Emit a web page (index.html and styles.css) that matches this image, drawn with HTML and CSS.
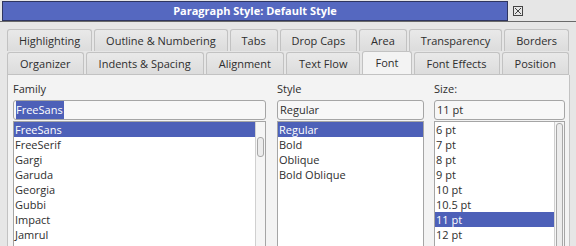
FILE: index.html
```html
<!DOCTYPE html>
<html lang="en">

<head>
    <meta charset="UTF-8">
    <title>Paragraph Style: Default Style</title>
    <link rel="stylesheet" href="styles.css">
</head>

<body>
    <div class="window">
        <div class="titlebar">
            <div class="title">Paragraph Style: Default Style</div>
            <div class="close-btn">
                <svg width="10" height="10" viewBox="0 0 10 10">
                    <rect x="0.5" y="0.5" width="9" height="9" fill="none" stroke="#444" />
                    <path d="M2 2 L8 8 M8 2 L2 8" stroke="#444" stroke-width="1" />
                </svg>
            </div>
        </div>

        <div class="tabs">
            <div class="tab-row">
                <div class="tab">Highlighting</div>
                <div class="tab">Outline &amp; Numbering</div>
                <div class="tab">Tabs</div>
                <div class="tab">Drop Caps</div>
                <div class="tab">Area</div>
                <div class="tab">Transparency</div>
                <div class="tab">Borders</div>
            </div>
            <div class="tab-row">
                <div class="tab">Organizer</div>
                <div class="tab">Indents &amp; Spacing</div>
                <div class="tab">Alignment</div>
                <div class="tab">Text Flow</div>
                <div class="tab active">Font</div>
                <div class="tab">Font Effects</div>
                <div class="tab">Position</div>
            </div>
        </div>

        <div class="panel">
            <div class="field family">
                <div class="label">Family</div>
                <div class="entry"><span class="sel-text">FreeSans</span></div>
                <div class="listbox">
                    <div class="items">
                        <div class="item selected">FreeSans</div>
                        <div class="item">FreeSerif</div>
                        <div class="item">Gargi</div>
                        <div class="item">Garuda</div>
                        <div class="item">Georgia</div>
                        <div class="item">Gubbi</div>
                        <div class="item">Impact</div>
                        <div class="item">Jamrul</div>
                    </div>
                    <div class="scrollbar">
                        <div class="thumb thumb-family"></div>
                    </div>
                </div>
            </div>

            <div class="field style">
                <div class="label">Style</div>
                <div class="entry">Regular</div>
                <div class="listbox">
                    <div class="items">
                        <div class="item selected">Regular</div>
                        <div class="item">Bold</div>
                        <div class="item">Oblique</div>
                        <div class="item">Bold Oblique</div>
                    </div>
                </div>
            </div>

            <div class="field size">
                <div class="label">Size:</div>
                <div class="entry">11 pt</div>
                <div class="listbox">
                    <div class="items">
                        <div class="item">6 pt</div>
                        <div class="item">7 pt</div>
                        <div class="item">8 pt</div>
                        <div class="item">9 pt</div>
                        <div class="item">10 pt</div>
                        <div class="item">10.5 pt</div>
                        <div class="item selected">11 pt</div>
                        <div class="item">12 pt</div>
                    </div>
                    <div class="scrollbar">
                        <div class="thumb thumb-size"></div>
                    </div>
                </div>
            </div>
        </div>
    </div>
</body>

</html>
```

FILE: styles.css
```css
* {
    box-sizing: border-box;
}

body {
    margin: 0;
    background-color: #e6e6e6;
    font-family: "Open Sans", sans-serif;
    font-size: 11px;
    color: #2e2e2e;
    overflow: hidden;
}

.window {
    width: 576px;
    height: 246px;
    overflow: hidden;
}

.titlebar {
    display: flex;
    align-items: center;
    height: 22px;
    padding: 1px 0 0 2px;
    border-bottom: 1px solid #6a6a6a;
}

.title {
    width: 506px;
    height: 20px;
    background-color: #5568c0;
    border: 1px solid #2e3560;
    color: #fff;
    font-weight: bold;
    font-size: 11px;
    line-height: 18px;
    text-align: center;
}

.close-btn {
    margin-left: 5px;
    display: flex;
    align-items: center;
}

.tabs {
    padding: 7px 7px 0 7px;
}

.tab-row {
    display: flex;
    gap: 2px;
}

.tab {
    flex-grow: 1;
    height: 22px;
    padding: 0 8px;
    border: 1px solid #c2c2c2;
    border-bottom: none;
    border-radius: 3px 3px 0 0;
    background: linear-gradient(#e9e9e9, #dcdcdc);
    text-align: center;
    line-height: 21px;
    white-space: nowrap;
}

.tab-row + .tab-row {
    margin-top: 1px;
    border-bottom: 1px solid #c2c2c2;
}

.tab.active {
    background: #f3f3f3;
    height: 23px;
    margin-top: -1px;
    margin-bottom: -1px;
    position: relative;
}

.panel {
    margin: 0 6px 0 7px;
    height: 171px;
    background-color: #f3f3f3;
    border-left: 1px solid #c2c2c2;
    border-right: 1px solid #c2c2c2;
    padding: 5px 4px 0 5px;
    display: grid;
    grid-template-columns: 253px 147px 130px;
    column-gap: 11px;
}

.field.size {
    margin-left: -1px;
}

.label {
    height: 20px;
    line-height: 18px;
}

.entry {
    height: 20px;
    border: 1px solid #a5a5a5;
    border-radius: 3px;
    background-color: #f7f7f7;
    padding: 0 2px;
    line-height: 18px;
}

.sel-text {
    background-color: #4d60b8;
    color: #fff;
    padding: 0 1px 1px 0;
    display: inline-block;
    line-height: 17px;
}

.listbox {
    margin-top: 1px;
    height: 130px;
    border: 1px solid #a5a5a5;
    background-color: #fff;
    display: flex;
}

.items {
    flex-grow: 1;
}

.item {
    height: 15px;
    line-height: 15px;
    padding-left: 1px;
    white-space: nowrap;
}

.item.selected {
    background-color: #4d60b8;
    color: #fff;
}

.scrollbar {
    width: 10px;
    border-left: 1px solid #d0d0d0;
    background-color: #f5f5f5;
    padding: 0 1px;
}

.thumb {
    border: 1px solid #a8a8a8;
    border-radius: 3px;
    background-color: #ececec;
}

.thumb-family {
    margin-top: 15px;
    height: 20px;
}

.thumb-size {
    margin-top: 1px;
    height: 140px;
}
```
